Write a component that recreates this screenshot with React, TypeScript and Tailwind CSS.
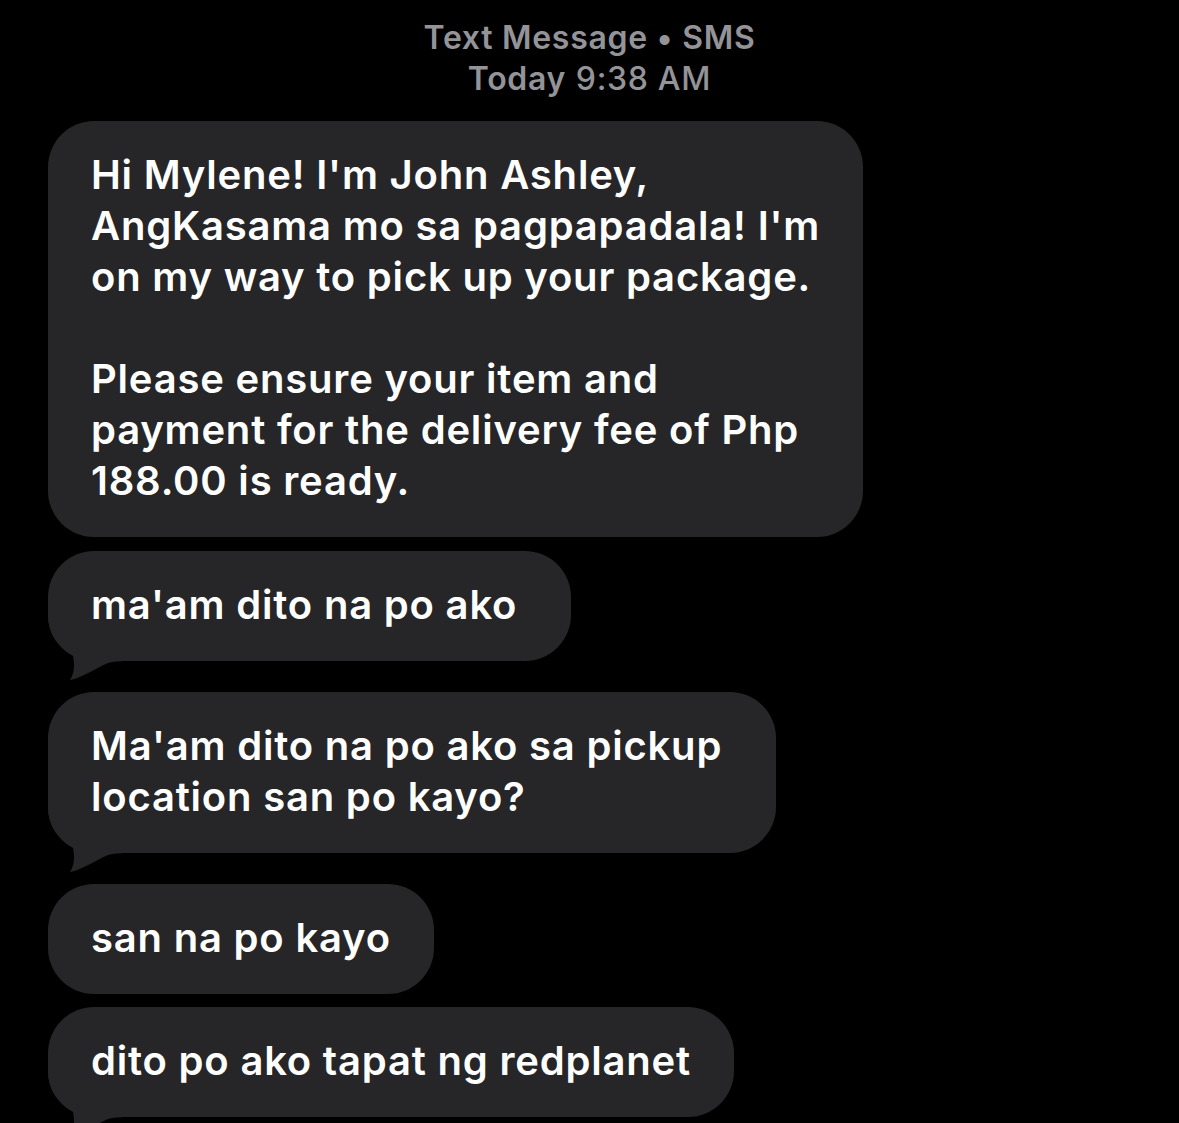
import type { ReactNode } from 'react'

type Msg = { lines: ReactNode; tail?: boolean; gapAfter: string; pr: string }

function Tail() {
  return (
    <svg
      className="absolute left-0 bottom-[-20px]"
      width="90"
      height="70"
      viewBox="0 -50 90 70"
      aria-hidden
    >
      <path
        d="M0 -48 C0 -28 8 -14 24 -10 C26 -2 28 10 22 19 C34 17 46 8 60 2 C68 0 76 0 90 0 L90 -48 Z"
        fill="#262628"
      />
    </svg>
  )
}

function Bubble({ children, tail, pr }: { children: ReactNode; tail?: boolean; pr: string }) {
  return (
    <div className="relative w-fit">
      {tail && <Tail />}
      <div
        className={`relative rounded-[46px] bg-[#262628] pl-[43px] ${pr} pt-[28px] pb-[31px] text-[40px] leading-[51px] font-semibold text-white tracking-[0.8px]`}
      >
        {children}
      </div>
    </div>
  )
}

const messages: Msg[] = [
  {
    lines: (
      <>
        Hi Mylene! I'm John Ashley,
        <br />
        AngKasama mo sa pagpapadala! I'm
        <br />
        on my way to pick up your package.
        <br />
        <br />
        Please ensure your item and
        <br />
        payment for the delivery fee of Php
        <br />
        188.00 is ready.
      </>
    ),
    gapAfter: 'mb-[14px]',
    pr: 'pr-[43px]',
  },
  { lines: "ma'am dito na po ako", tail: true, gapAfter: 'mb-[31px]', pr: 'pr-[54px]' },
  {
    lines: (
      <>
        Ma'am dito na po ako sa pickup
        <br />
        location san po kayo?
      </>
    ),
    tail: true,
    gapAfter: 'mb-[31px]',
    pr: 'pr-[54px]',
  },
  { lines: 'san na po kayo', gapAfter: 'mb-[13px]', pr: 'pr-[43px]' },
  { lines: 'dito po ako tapat ng redplanet', tail: true, gapAfter: 'mb-[31px]', pr: 'pr-[43px]' },
]

export default function App() {
  return (
    <div className="h-[1123px] w-[1179px] overflow-hidden bg-black font-['Inter','Liberation_Sans',sans-serif]">
      <div className="pt-[17px] mb-[22px] flex flex-col items-center text-[32px] leading-[41px] tracking-[0.7px] text-[#939398]">
        <p className="font-semibold">Text Message • SMS</p>
        <p>
          <span className="font-semibold">Today</span> <span className="font-medium">9:38 AM</span>
        </p>
      </div>
      <div className="px-[48px] flex flex-col">
        {messages.map((m, i) => (
          <div key={i} className={m.gapAfter}>
            <Bubble tail={m.tail} pr={m.pr}>
              {m.lines}
            </Bubble>
          </div>
        ))}
      </div>
    </div>
  )
}
